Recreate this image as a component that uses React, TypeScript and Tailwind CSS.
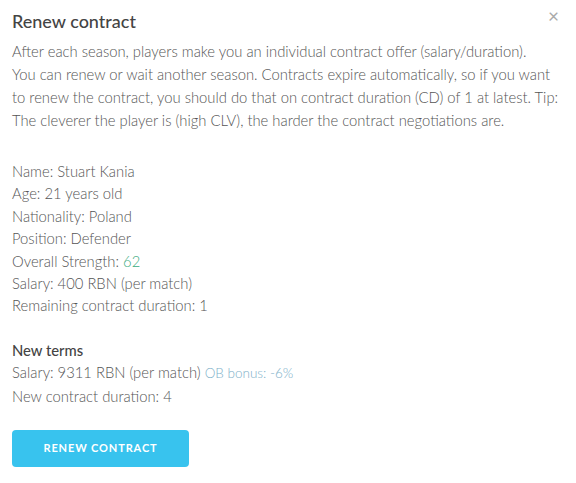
import React from "react";

export default function App() {
  return (
    <div className="w-[576px] h-[483px] bg-white relative text-[#555] font-['Lato',sans-serif] font-light overflow-hidden">
      <button className="absolute right-[17px] top-[6px] text-[#aaa] text-[19px] leading-none font-normal">×</button>
      <div className="px-3 pt-[10px]">
        <h2 className="text-[18px] leading-[22px] text-[#444] font-medium">Renew contract</h2>
        <div className="mt-[8px] text-[14.8px] leading-[23px] whitespace-nowrap">
          <div>After each season, players make you an individual contract offer (salary/duration).</div>
          <div>You can renew or wait another season. Contracts expire automatically, so if you want</div>
          <div>to renew the contract, you should do that on contract duration (CD) of 1 at latest. Tip:</div>
          <div>The cleverer the player is (high CLV), the harder the contract negotiations are.</div>
        </div>
        <div className="mt-[28px] text-[14.8px] leading-[22.4px]">
          <div>Name: Stuart Kania</div>
          <div>Age: 21 years old</div>
          <div>Nationality: Poland</div>
          <div>Position: Defender</div>
          <div>Overall Strength: <span className="text-[#3bab7e]">62</span></div>
          <div>Salary: 400 RBN (per match)</div>
          <div>Remaining contract duration: 1</div>
        </div>
        <div className="mt-[22px] text-[14.8px] leading-[22.4px]">
          <div className="font-medium text-[#444]">New terms</div>
          <div>Salary: 9311 RBN (per match) <span className="text-[13.5px] text-[#7eb0c9]">OB bonus: -6%</span></div>
          <div>New contract duration: 4</div>
        </div>
        <button className="mt-[23px] w-[177px] h-[37px] rounded-[4px] bg-[#38c3ee] text-white text-[11px] font-bold tracking-[0.08em]">
          RENEW CONTRACT
        </button>
      </div>
    </div>
  );
}
